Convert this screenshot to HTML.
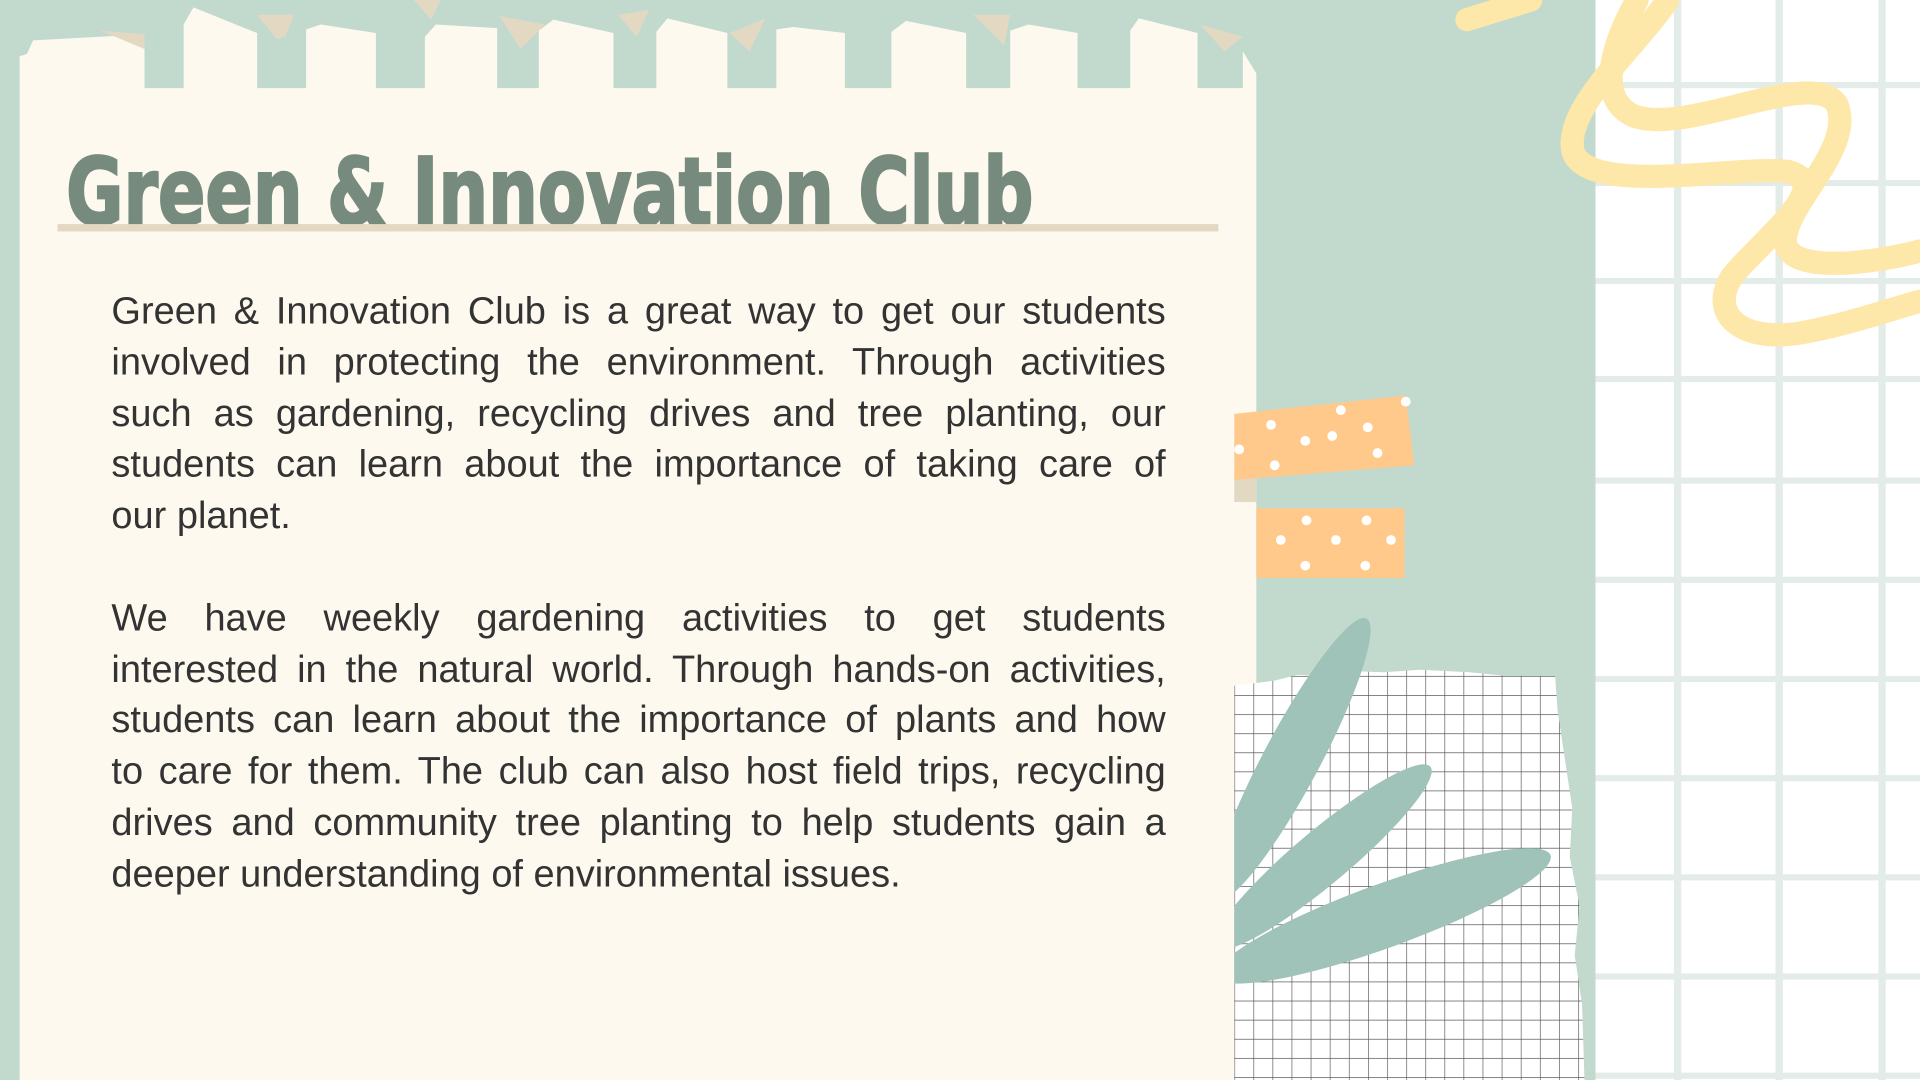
<!DOCTYPE html>
<html><head><meta charset="utf-8"><style>
html,body{margin:0;padding:0;width:1920px;height:1080px;overflow:hidden;background:#c2d9ce}
#w{position:absolute;left:0;top:0;width:1568px;height:882px;transform:scale(1.22449);transform-origin:0 0}
svg{position:absolute;left:0;top:0}
#txt{position:absolute;left:91px;top:233px;width:861px;font-family:"Liberation Sans",sans-serif;font-size:31px;line-height:41.8px;color:#333;white-space:nowrap}
#txt div{height:41.8px;text-align:justify;text-align-last:justify}
#txt div.l{text-align-last:left}
</style></head><body><div id="w">
<svg width="1568" height="882" viewBox="0 0 1568 882">
<defs>
<pattern id="g" x="1008" y="552" width="15.6" height="15.6" patternUnits="userSpaceOnUse"><rect width="15.6" height="15.6" fill="#fff"/><path d="M0 0H15.6M0 0V15.6" stroke="#5a5a5a" stroke-width="1.1"/></pattern>
<clipPath id="c"><rect x="1008" y="0" width="560" height="882"/></clipPath>
</defs>
<rect width="1568" height="882" fill="#c2d9ce"/>
<rect x="1303" y="0" width="265" height="882" fill="#fff"/>
<g fill="#e3ece8">
<rect x="1367" y="0" width="6" height="882"/><rect x="1450" y="0" width="6" height="882"/><rect x="1534" y="0" width="6" height="882"/>
<rect x="1303" y="67" width="265" height="5"/><rect x="1303" y="147" width="265" height="5"/><rect x="1303" y="227" width="265" height="5"/><rect x="1303" y="307" width="265" height="5"/><rect x="1303" y="390" width="265" height="5"/><rect x="1303" y="471" width="265" height="5"/><rect x="1303" y="552" width="265" height="5"/><rect x="1303" y="633" width="265" height="5"/><rect x="1303" y="714" width="265" height="5"/><rect x="1303" y="795" width="265" height="5"/><rect x="1303" y="876" width="265" height="5"/>
</g>
<g fill="none" stroke="#fde8a9" stroke-width="19" stroke-linecap="round">
<path d="M1362 0C1335 40 1275 90 1285 125C1300 160 1420 135 1460 140C1500 150 1440 195 1415 225C1395 255 1420 280 1470 272C1510 265 1545 252 1568 246"/>
<path d="M1337 0C1320 30 1300 80 1335 95C1380 110 1480 55 1500 85C1515 120 1460 165 1458 195C1456 225 1530 215 1568 205"/>
<path d="M1198 16L1250 0"/>
</g>
<path d="M16 882V46L22 44L27 33L118 28L118 72L150 72L150 20L158 6L210 27L210 72L250 72L250 24L262 20L307 27L307 72L347 72L347 30L356 20L406 23L406 72L440 72L440 25L452 16L501 27L501 72L536 72L536 26L545 15L594 27L594 72L634 72L634 24L648 22L690 27L690 72L728 72L728 26L740 17L789 27L789 72L825 72L825 25L840 20L880 27L880 72L923 72L923 25L930 15L978 27L978 72L1015 72L1015 42L1026 60V882Z" fill="#fdf9ef"/>
<g fill="#e3d9c3">
<path d="M82 25L118 28L118 40Z"/><path d="M210 12L240 12L233 30L226 32Z"/><path d="M338 0L360 0L352 16Z"/><path d="M408 13L445 20L425 40Z"/><path d="M505 12L530 8L520 30Z"/><path d="M596 27L625 15L612 42Z"/><path d="M795 12L825 12L820 37Z"/><path d="M980 20L1015 30L1000 42Z"/>
</g>
<text x="54" y="183" font-family="DejaVu Sans" font-weight="bold" font-size="76" fill="#768a7e" stroke="#768a7e" stroke-width="2" textLength="790" lengthAdjust="spacingAndGlyphs">Green &amp; Innovation Club</text>
<rect x="47" y="183" width="948" height="6" fill="#e3d9c3"/>
<rect x="1008" y="390" width="18" height="20" fill="#e3d9c3"/>
<path d="M1008 338L1148 323L1155 380L1008 392Z" fill="#fec98a"/>
<rect x="1026" y="415" width="121" height="57" fill="#fec98a"/>
<g fill="#fff">
<circle cx="1012" cy="367" r="4"/><circle cx="1038" cy="347" r="4"/><circle cx="1066" cy="360" r="4"/><circle cx="1095" cy="335" r="4"/><circle cx="1041" cy="380" r="4"/><circle cx="1088" cy="356" r="4"/><circle cx="1148" cy="328" r="4"/><circle cx="1117" cy="349" r="4"/><circle cx="1125" cy="370" r="4"/>
<circle cx="1067" cy="425" r="4"/><circle cx="1116" cy="425" r="4"/><circle cx="1046" cy="441" r="4"/><circle cx="1091" cy="441" r="4"/><circle cx="1136" cy="441" r="4"/><circle cx="1066" cy="462" r="4"/><circle cx="1115" cy="462" r="4"/>
</g>
<path d="M1008 560L1040 556L1060 551L1080 552L1100 548L1130 549L1160 547L1200 549L1230 552L1270 552L1272 580L1278 620L1284 660L1282 700L1290 740L1286 780L1292 820L1294 882L1008 882Z" fill="url(#g)"/>
<g fill="#9fc3b8" clip-path="url(#c)">
<ellipse cx="1055" cy="620" rx="130" ry="23" transform="rotate(-62 1055 620)"/>
<ellipse cx="1080" cy="700" rx="115" ry="22" transform="rotate(-40 1080 700)"/>
<ellipse cx="1130" cy="748" rx="145" ry="26" transform="rotate(-20 1130 748)"/>
</g>
</svg>
<div id="txt">
<div>Green &amp; Innovation Club is a great way to get our students</div>
<div>involved in protecting the environment. Through activities</div>
<div>such as gardening, recycling drives and tree planting, our</div>
<div>students can learn about the importance of taking care of</div>
<div class="l">our planet.</div>
<div class="l">&nbsp;</div>
<div>We have weekly gardening activities to get students</div>
<div>interested in the natural world. Through hands-on activities,</div>
<div>students can learn about the importance of plants and how</div>
<div>to care for them. The club can also host field trips, recycling</div>
<div>drives and community tree planting to help students gain a</div>
<div class="l">deeper understanding of environmental issues.</div>
</div>
</div></body></html>
